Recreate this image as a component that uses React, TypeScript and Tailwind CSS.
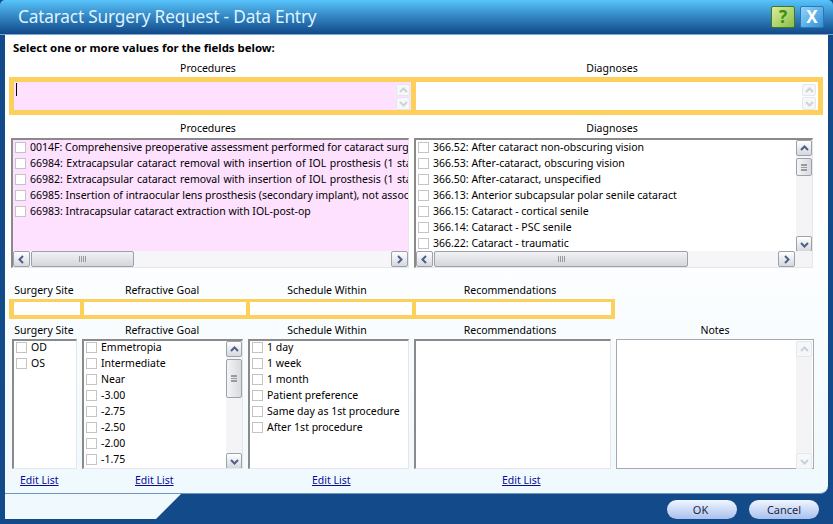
import React from "react";

const font = "font-['Noto_Sans',sans-serif]";

function Chevron({ dir, color }: { dir: "up" | "down" | "left" | "right"; color: string }) {
  const pts = {
    up: "2,7 5.5,3.5 9,7",
    down: "2,4 5.5,7.5 9,4",
    left: "7,2 3.5,5.5 7,9",
    right: "4,2 7.5,5.5 4,9",
  }[dir];
  return (
    <svg width="11" height="11" viewBox="0 0 11 11">
      <polyline points={pts} fill="none" stroke={color} strokeWidth="2" />
    </svg>
  );
}

function SBtn({ dir, disabled, gray, cls }: { dir: "up" | "down" | "left" | "right"; disabled?: boolean; gray?: boolean; cls: string }) {
  return (
    <div
      className={`${cls} shrink-0 flex items-center justify-center rounded-[2px] border ${
        disabled ? "border-[#e4e8ee] bg-[#f6f7f9]" : "border-[#9aa2ad] bg-gradient-to-b from-[#ffffff] to-[#d6d8de]"
      }`}
    >
      <Chevron dir={dir} color={gray ? "#cfd2d6" : disabled ? "#c5d2e0" : "#4d6185"} />
    </div>
  );
}

function VScroll({ thumbH, thumbTop, disabled, tall }: { thumbH?: number; thumbTop?: number; disabled?: boolean; tall?: boolean }) {
  return (
    <div className={`w-[16px] shrink-0 flex flex-col bg-[#f4f4f7] ${tall ? "h-[128px]" : "h-[112px]"}`}>
      <SBtn dir="up" disabled={disabled} cls="h-[16px] w-[16px]" />
      <div className="flex-1 relative">
        {thumbH ? (
          <div
            className="absolute left-0 w-[16px] rounded-[2px] border border-[#9aa2ad] bg-gradient-to-r from-[#f4f4f6] to-[#d8dade] flex items-center justify-center"
            style={{ height: thumbH, top: thumbTop }}
          >
            <div className="w-[6px] h-[7px] border-y border-[#9a9a9a] bg-[repeating-linear-gradient(#9a9a9a_0_1px,transparent_1px_2px)]" />
          </div>
        ) : null}
      </div>
      <SBtn dir="down" disabled={disabled} cls="h-[16px] w-[16px]" />
    </div>
  );
}

function HScroll({ thumb, rightGap }: { thumb: number; rightGap?: boolean }) {
  return (
    <div className="h-[16px] flex bg-[#f6f6f9]">
      <SBtn dir="left" cls="w-[17px] h-[16px]" />
      <div
        className="h-[16px] ml-[1px] shrink-0 rounded-[2px] border border-[#9aa2ad] bg-gradient-to-b from-[#f2f2f4] to-[#d4d6db] flex items-center justify-center"
        style={{ width: thumb }}
      >
        <div className="w-[7px] h-[6px] bg-[repeating-linear-gradient(90deg,#9a9a9a_0_1px,transparent_1px_2px)]" />
      </div>
      <div className="flex-1" />
      <SBtn dir="right" cls="w-[17px] h-[16px]" />
      {rightGap ? <div className="w-[17px] bg-[#f4f4f7]" /> : null}
    </div>
  );
}

function Row({ text, wide }: { text: string; wide?: boolean }) {
  return (
    <div className="h-[16px] flex items-center whitespace-nowrap">
      <span className="w-[11px] h-[11px] shrink-0 ml-[2px] mr-[4px] border border-[#c4c4c4] bg-white" />
      <span className={`text-[10.5px] leading-[16px] text-black ${wide ? "[word-spacing:0.8px]" : ""}`}>{text}</span>
    </div>
  );
}

function ListBox({ cls, children }: { cls: string; children?: React.ReactNode }) {
  return (
    <div
      className={`${cls} h-[130px] shrink-0 overflow-hidden border-t-2 border-l-2 border-r border-b border-t-[#8a8a8a] border-l-[#8a8a8a] border-r-[#e6e6e6] border-b-[#e6e6e6] flex flex-col`}
    >
      {children}
    </div>
  );
}

function Label({ cls, children }: { cls: string; children: string }) {
  return <div className={`${cls} shrink-0 h-[14px] leading-[14px] text-[10.5px] text-black text-center`}>{children}</div>;
}

const procs = [
  { t: "0014F: Comprehensive preoperative assessment performed for cataract surgery" },
  { t: "66984: Extracapsular cataract removal with insertion of IOL prosthesis (1 stage", wide: true },
  { t: "66982: Extracapsular cataract removal with insertion of IOL prosthesis (1 stage", wide: true },
  { t: "66985: Insertion of intraocular lens prosthesis (secondary implant), not associated" },
  { t: "66983: Intracapsular cataract extraction with IOL-post-op" },
];
const diags = [
  "366.52: After cataract non-obscuring vision",
  "366.53: After-cataract, obscuring vision",
  "366.50: After-cataract, unspecified",
  "366.13: Anterior subcapsular polar senile cataract",
  "366.15: Cataract - cortical senile",
  "366.14: Cataract - PSC senile",
  "366.22: Cataract - traumatic",
];
const goals = ["Emmetropia", "Intermediate", "Near", "-3.00", "-2.75", "-2.50", "-2.00", "-1.75"];
const sched = ["1 day", "1 week", "1 month", "Patient preference", "Same day as 1st procedure", "After 1st procedure"];

function EditLink({ cls }: { cls: string }) {
  return (
    <a className={`${cls} shrink-0 text-center whitespace-nowrap text-[10.5px] leading-[14px] text-[#0a0a96] underline`}>Edit List</a>
  );
}

export default function App() {
  return (
    <div className={`${font} w-[833px] h-[524px] overflow-hidden flex flex-col bg-[#134a8a]`}>
      <div className="h-[35px] shrink-0 flex items-center rounded-t-[5px] bg-gradient-to-b from-[#58c4fb] to-[#12498a] border-b border-[#7fa6cc]">
        <div className="ml-[18px] text-[17.3px] tracking-[-0.2px] leading-[24px] text-[#dff3ff]">Cataract Surgery Request - Data Entry</div>
        <div className="ml-auto w-[24px] h-[22px] rounded-[2px] border border-[#3f7a22] bg-gradient-to-br from-[#d9ee9d] to-[#8dbc47] flex items-center justify-center text-[17px] font-bold leading-none text-[#3f8e12] mt-[-1px]">
          ?
        </div>
        <div className="ml-[5px] mr-[9px] w-[24px] h-[22px] rounded-[2px] border border-[#2b78b8] bg-gradient-to-br from-[#8fd6fb] to-[#2f8fd8] flex items-center justify-center text-[17px] font-bold leading-none text-white mt-[-1px]">
          X
        </div>
      </div>

      <div className="mx-[5px] h-[459px] shrink-0 flex flex-col rounded-br-[8px] border-b border-[#6f97be] bg-gradient-to-b from-[#ffffff] from-40% to-[#eff9fe]">
        <div className="h-[26px] shrink-0 leading-[26px] pl-[8px] text-[11.4px] font-bold text-black">
          Select one or more values for the fields below:
        </div>

        <div className="flex">
          <Label cls="ml-[5px] w-[396px]">Procedures</Label>
          <Label cls="ml-[8px] w-[396px]">Diagnoses</Label>
        </div>

        <div className="mt-[2px] ml-[4px] w-[814px] h-[38px] shrink-0 border-[5px] border-[#fdd05c] flex bg-[#fdd05c]">
          <div className="w-[397px] flex bg-[#fde1fe]">
            <div className="ml-[2px] mt-[1px] w-[1px] h-[13px] bg-black" />
            <div className="ml-auto mr-[1px] mt-[2px] flex flex-col gap-[1px]">
              <SBtn dir="up" disabled gray cls="w-[14px] h-[12px]" />
              <SBtn dir="down" disabled gray cls="w-[14px] h-[13px]" />
            </div>
          </div>
          <div className="ml-[5px] flex-1 flex bg-white">
            <div className="ml-auto mr-[2px] mt-[2px] flex flex-col gap-[1px]">
              <SBtn dir="up" disabled gray cls="w-[14px] h-[12px]" />
              <SBtn dir="down" disabled gray cls="w-[14px] h-[13px]" />
            </div>
          </div>
        </div>

        <div className="flex mt-[6px]">
          <Label cls="ml-[5px] w-[396px]">Procedures</Label>
          <Label cls="ml-[8px] w-[396px]">Diagnoses</Label>
        </div>

        <div className="mt-[3px] ml-[6px] flex gap-[5px]">
          <ListBox cls="w-[398px] bg-[#fde1fe]">
            <div className="h-[111px] shrink-0 overflow-hidden">
              <div className="-mt-[1px]">
                {procs.map((p, i) => (
                  <Row key={i} text={p.t} wide={p.wide} />
                ))}
              </div>
            </div>
            <HScroll thumb={103} />
          </ListBox>
          <ListBox cls="w-[399px] bg-white">
            <div className="h-[111px] shrink-0 flex">
              <div className="flex-1 overflow-hidden">
                <div className="-mt-[1px]">
                  {diags.map((p) => (
                    <Row key={p} text={p} />
                  ))}
                </div>
              </div>
              <VScroll thumbH={18} thumbTop={2} />
            </div>
            <HScroll thumb={254} rightGap />
          </ListBox>
        </div>

        <div className="flex mt-[15px]">
          <Label cls="ml-[7px] w-[64px]">Surgery Site</Label>
          <Label cls="ml-[6px] w-[160px]">Refractive Goal</Label>
          <Label cls="ml-[5px] w-[160px]">Schedule Within</Label>
          <Label cls="ml-[8px] w-[190px]">Recommendations</Label>
        </div>

        <div className="mt-[2px] ml-[4px] w-[606px] h-[20px] shrink-0 border-t-[3px] border-b-[4px] border-x-[4px] border-l-[5px] border-[#fdd05c] flex gap-[4px] bg-[#fdd05c]">
          <div className="w-[66px] bg-white" />
          <div className="w-[162px] bg-white" />
          <div className="w-[162px] bg-white" />
          <div className="flex-1 bg-white" />
        </div>

        <div className="flex mt-[4px]">
          <Label cls="ml-[7px] w-[64px]">Surgery Site</Label>
          <Label cls="ml-[6px] w-[160px]">Refractive Goal</Label>
          <Label cls="ml-[5px] w-[160px]">Schedule Within</Label>
          <Label cls="ml-[8px] w-[190px]">Recommendations</Label>
          <Label cls="ml-[11px] w-[198px]">Notes</Label>
        </div>

        <div className="mt-[2px] ml-[7px] flex gap-[5px]">
          <ListBox cls="w-[65px] bg-white">
            <div className="-mt-[2px]">
              <Row text="OD" />
              <Row text="OS" />
            </div>
          </ListBox>
          <ListBox cls="w-[161px] bg-white">
            <div className="flex">
              <div className="flex-1 overflow-hidden h-[128px]">
                <div className="-mt-[2px]">
                  {goals.map((p) => (
                    <Row key={p} text={p} />
                  ))}
                </div>
              </div>
              <VScroll thumbH={39} thumbTop={2} tall />
            </div>
          </ListBox>
          <ListBox cls="w-[161px] bg-white">
            <div className="-mt-[2px]">
              {sched.map((p) => (
                <Row key={p} text={p} />
              ))}
            </div>
          </ListBox>
          <ListBox cls="w-[197px] bg-white" />
          <div className="w-[198px] h-[130px] shrink-0 border border-[#a8a8a8] bg-white flex justify-end pt-[1px] pr-[1px]">
            <VScroll disabled tall />
          </div>
        </div>

        <div className="mt-[4px] flex">
          <EditLink cls="ml-[15px] w-[38px]" />
          <EditLink cls="ml-[77px] w-[38px]" />
          <EditLink cls="ml-[139px] w-[38px]" />
          <EditLink cls="ml-[152px] w-[38px]" />
        </div>
      </div>

      <div className="flex-1 flex pl-[5px]">
        <div className="w-[176px] h-[25px] bg-[#eff9fe] [clip-path:polygon(0_0,100%_0,151px_100%,0_100%)]" />
        <div className="ml-auto mt-[6px] mr-[14px] flex gap-[12px] h-[19px]">
          <div className="w-[70px] h-[19px] pr-[3px] rounded-full bg-gradient-to-b from-[#f2f6fe] to-[#a9c0ee] text-center text-[11px] leading-[19px] text-[#1b2a44]">OK</div>
          <div className="w-[70px] h-[19px] rounded-full bg-gradient-to-b from-[#f2f6fe] to-[#a9c0ee] text-center text-[11px] leading-[19px] text-[#1b2a44]">Cancel</div>
        </div>
      </div>
    </div>
  );
}
